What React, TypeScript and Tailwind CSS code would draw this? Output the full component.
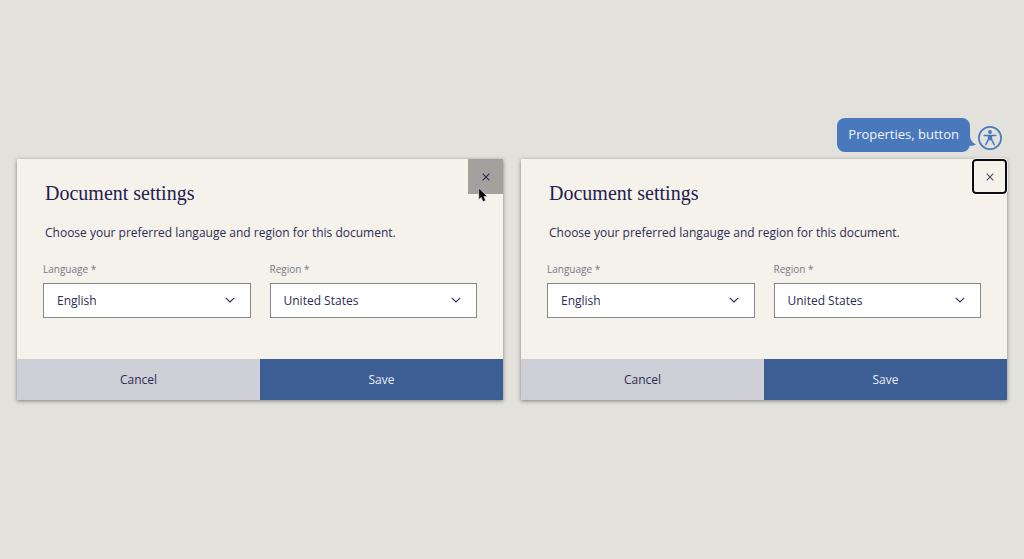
import { useId } from "react";

const languages = ["English", "French", "German", "Spanish"];
const regions = ["United States", "Canada", "United Kingdom", "Australia"];

function CloseIcon() {
  return (
    <svg className="w-2 h-2" viewBox="0 0 8 8" fill="none" stroke="currentColor" strokeWidth="1.1" aria-hidden="true">
      <path d="M0.7 0.7 7.3 7.3M7.3 0.7 0.7 7.3" />
    </svg>
  );
}

function CursorIcon() {
  return (
    <svg
      className="absolute left-[10px] top-[28px] w-[10px] h-[16px] pointer-events-none"
      viewBox="0 0 10 16"
      aria-hidden="true"
    >
      <path
        d="M0.8 1V12.4L3.2 10.4 5 14.6 7.6 13.5 5.8 9.4H9.2Z"
        fill="#050505"
        stroke="#f4f4f4"
        strokeWidth="0.5"
        strokeLinejoin="round"
      />
    </svg>
  );
}

function AccessibilityIcon() {
  return (
    <svg className="w-6 h-6 shrink-0" viewBox="0 0 24 24" fill="none" stroke="#4a78bd" aria-hidden="true">
      <circle cx="12" cy="12" r="11.1" strokeWidth="1.7" />
      <circle cx="12" cy="6" r="1.9" fill="#4a78bd" stroke="none" />
      <path
        d="M6.2 9.4H17.8M10.6 9.6V13.2L7.8 18.6M13.4 9.6V13.2L16.2 18.6M10.6 13.6H13.4"
        strokeWidth="1.5"
        strokeLinecap="round"
        strokeLinejoin="round"
      />
      <path d="M10 9.3H14V13.8H10Z" fill="#4a78bd" stroke="none" />
    </svg>
  );
}

function SelectField({ label, options }: { label: string; options: string[] }) {
  const id = useId();

  return (
    <div className="flex-1 min-w-0">
      <label htmlFor={id} className="block text-[10px] leading-4 text-[#77778b]">
        {label} *
      </label>
      <div className="relative mt-[6px]">
        <select
          id={id}
          defaultValue={options[0]}
          className="block w-full h-[35px] pl-[13px] pr-8 appearance-none bg-white border border-[#85858a] rounded-none text-xs text-[#2b2c55] outline-none"
        >
          {options.map((option) => (
            <option key={option}>{option}</option>
          ))}
        </select>
        <svg
          className="absolute right-4 top-[14px] w-[10px] h-[6px] text-[#2b2c55] pointer-events-none"
          viewBox="0 0 10 6"
          fill="none"
          stroke="currentColor"
          strokeWidth="1.1"
          aria-hidden="true"
        >
          <path d="M0.7 0.8 5 5 9.3 0.8" />
        </svg>
      </div>
    </div>
  );
}

function ScreenReaderHint() {
  return (
    <div className="absolute bottom-full right-[5px] mb-[7px] flex items-end gap-2">
      <div className="relative rounded-lg bg-[#4a78bd] px-[11px] h-[34px] flex items-center whitespace-nowrap text-[13px] text-[#f2f4f8]">
        Properties, button
        <svg className="absolute -right-[6px] bottom-[6px] w-[8px] h-[11px]" viewBox="0 0 8 11" aria-hidden="true">
          <path d="M0 0H2C2 5 4.5 8 8 9.3 5.5 11 2.5 11 0 10.5Z" fill="#4a78bd" />
        </svg>
      </div>
      <div className="pb-[2px]">
        <AccessibilityIcon />
      </div>
    </div>
  );
}

function SettingsDialog({ state }: { state: "hover" | "focus" }) {
  const titleId = useId();

  return (
    <section
      role="dialog"
      aria-labelledby={titleId}
      className="relative flex-1 min-w-0 bg-[#f5f2eb] shadow-[0_1px_4px_rgba(0,0,0,0.45)]"
    >
      {state === "focus" && <ScreenReaderHint />}

      <header className="flex items-start justify-between pl-7">
        <h2 id={titleId} className="pt-[21px] font-['Liberation_Serif',serif] text-[20px] leading-[26px] text-[#1f2050]">
          Document settings
        </h2>
        <button
          type="button"
          aria-label="Close"
          className={
            state === "hover"
              ? "relative flex items-center justify-center w-[35px] h-[35px] bg-[#a2a19d] text-[#2b2c55]"
              : "relative flex items-center justify-center w-[35px] h-[35px] rounded border-2 border-[#0b0b12] text-[#4b4b60] outline outline-1 outline-white/70"
          }
        >
          <CloseIcon />
          {state === "hover" && <CursorIcon />}
        </button>
      </header>

      <p className="mt-[17px] px-7 text-xs leading-5 text-[#2b2c55]">
        Choose your preferred langauge and region for this document.
      </p>

      <div className="flex gap-[19px] px-[26px] mt-[18px] pb-[41px]">
        <SelectField label="Language" options={languages} />
        <SelectField label="Region" options={regions} />
      </div>

      <footer className="flex h-[41px] text-xs">
        <button type="button" className="flex-1 bg-[#cfcfd8] text-[#2b2c55]">
          Cancel
        </button>
        <button type="button" className="flex-1 bg-[#3d5e94] text-[#e6eaf2]">
          Save
        </button>
      </footer>
    </section>
  );
}

export default function App() {
  return (
    <main className="min-h-screen flex items-center gap-[18px] px-[17px] bg-[#e2e1dc] font-['Open_Sans',sans-serif]">
      <SettingsDialog state="hover" />
      <SettingsDialog state="focus" />
    </main>
  );
}
